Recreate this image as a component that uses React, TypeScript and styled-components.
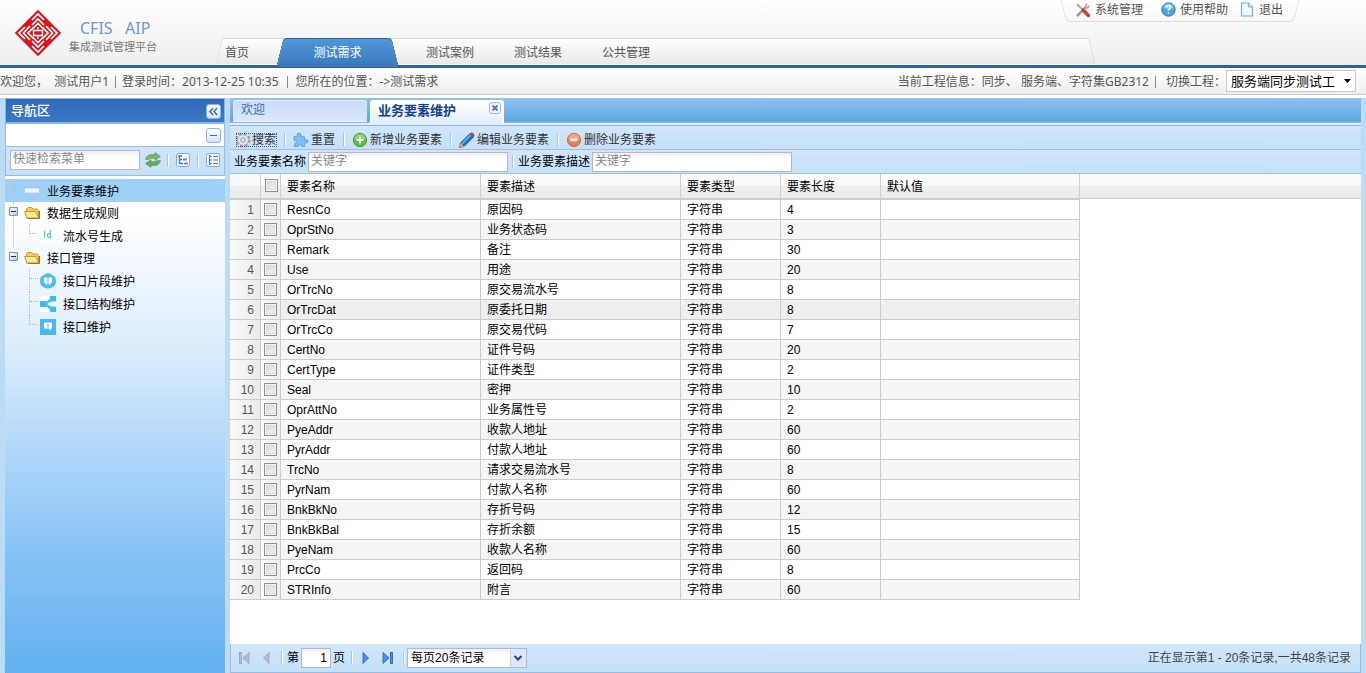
import React from 'react';
import styled, { createGlobalStyle, css } from 'styled-components';

const Global = createGlobalStyle`
  *, *::before, *::after { box-sizing: border-box; }
  body {
    margin: 0;
    font-family: "Liberation Sans", "Noto Sans CJK SC", sans-serif;
    font-size: 12px;
    line-height: 16px;
    color: #000;
    background: #fff;
  }
  button, input, select { font: inherit; color: inherit; margin: 0; }
  button { padding: 0; border: 0; background: none; cursor: pointer; }
  a { color: inherit; text-decoration: none; }
`;

const Page = styled.div`
  display: flex;
  flex-direction: column;
  min-height: 100vh;
`;

/* ---------- header ---------- */

const Header = styled.header`
  display: flex;
  position: relative;
  height: 68px;
  background: linear-gradient(#fff, #fafafa 30%, #eee);
  border-bottom: 3px solid #2b659f;
  color: #555;
`;

const Brand = styled.div`
  display: flex;
  flex: none;
  width: 215px;
  padding: 9px 0 0 14px;
  gap: 7px;
`;

const BrandText = styled.div`
  padding-top: 10px;
`;

const BrandName = styled.div`
  padding-left: 11px;
  font-family: "Noto Sans", sans-serif;
  font-size: 16px;
  line-height: 18px;
  color: #7096d6;
  white-space: pre;
`;

const BrandSub = styled.div`
  font-size: 11px;
  line-height: 20px;
  color: #777;
`;

const slant = css`
  content: "";
  position: absolute;
  top: 0;
  bottom: 0;
`;

const Nav = styled.nav`
  display: flex;
  position: relative;
  align-self: flex-end;
  flex: 1;
  height: 27px;
  margin-right: 270px;
  isolation: isolate;
  &::before, &::after {
    ${slant}
    z-index: -1;
    border: 1px solid #d8d8d8;
    border-bottom-color: #fff;
    background: linear-gradient(#fdfdfd, #e9e9e7);
    box-shadow: inset 0 1px 0 #fff;
  }
  &::before {
    left: 0;
    width: 50%;
    border-right: 0;
    border-top-left-radius: 4px;
    border-left-color: #e2e2e2;
    transform: skewX(-14deg);
    transform-origin: bottom left;
  }
  &::after {
    right: 0;
    width: 51%;
    border-left: 0;
    border-top-right-radius: 4px;
    transform: skewX(14deg);
    transform-origin: bottom right;
  }
`;

const NavLink = styled.a`
  padding: 7px 20px 0;
  white-space: nowrap;
  &:first-child { padding: 7px 27px 0 10px; }
`;

const NavActive = styled.a`
  position: relative;
  isolation: isolate;
  width: 123px;
  height: 29px;
  padding-top: 7px;
  margin-right: 7px;
  text-align: center;
  color: #fff;
  &::before, &::after {
    ${slant}
    z-index: -1;
    width: 60%;
    border: 1px solid #2b659f;
    border-bottom: 0;
    background: linear-gradient(#5197da, #3a78b8);
  }
  &::before {
    left: 0;
    border-right: 0;
    border-top-left-radius: 4px;
    transform: skewX(-14deg);
    transform-origin: bottom left;
  }
  &::after {
    right: 0;
    border-left: 0;
    border-top-right-radius: 4px;
    transform: skewX(14deg);
    transform-origin: bottom right;
  }
`;

const QuickLinks = styled.div`
  display: flex;
  position: absolute;
  top: 0;
  right: 66px;
  width: 240px;
  height: 22px;
  padding: 2px 0 0 15px;
  isolation: isolate;
  &::before, &::after {
    ${slant}
    z-index: -1;
    width: 55%;
    border-bottom: 1px solid #ddd;
    background: linear-gradient(#fff, #f7f7f7);
  }
  &::before {
    left: 0;
    border-left: 1px solid #ddd;
    border-bottom-left-radius: 4px;
    transform: skewX(16deg);
    transform-origin: top left;
  }
  &::after {
    right: 0;
    border-right: 1px solid #ddd;
    border-bottom-right-radius: 4px;
    transform: skewX(-16deg);
    transform-origin: top right;
  }
`;

const QuickLink = styled.a`
  display: flex;
  flex: none;
  gap: 4px;
  margin-right: 18px;
  white-space: nowrap;
  &:nth-child(2) { margin-right: 12px; }
`;

/* ---------- info bar ---------- */

const InfoBar = styled.div`
  display: flex;
  align-items: center;
  height: 27px;
  padding: 1px 10px 0 0;
  margin-bottom: 3px;
  background: linear-gradient(#fff, #eee);
  border-bottom: 1px solid #ccc;
  font-family: "Noto Sans", "Noto Sans CJK SC", sans-serif;
  color: #555;
  white-space: pre;
`;

const Spacer = styled.div`
  flex: 1;
`;

const Bar = styled.span<{ $gap?: number }>`
  width: 1px;
  height: 12px;
  margin: 0 ${p => p.$gap ?? 6}px;
  background: #888;
`;

const ProjectLabel = styled.label`
  display: flex;
  align-items: center;
  padding-left: 4px;
`;

const SelectShell = styled.span`
  position: relative;
  display: flex;
  margin-top: -1px;
  svg {
    position: absolute;
    right: 4px;
    top: 8px;
    pointer-events: none;
  }
`;

const ProjectSelect = styled.select`
  appearance: none;
  width: 130px;
  height: 22px;
  padding: 0 16px 0 4px;
  border: 1px solid #c6c6cf;
  border-radius: 0;
  background: #fff;
  font-size: 13px;
  color: #000;
`;

/* ---------- workspace ---------- */

const Workspace = styled.div`
  display: flex;
  flex: 1;
  gap: 5px;
  padding: 0 5px;
  background: #bcdcf5;
`;

const Sidebar = styled.aside`
  display: flex;
  flex-direction: column;
  flex: none;
  width: 220px;
`;

const SideTitle = styled.div`
  display: flex;
  align-items: center;
  justify-content: space-between;
  height: 26px;
  padding: 1px 3px 0 5px;
  border: 1px solid #8db4e8;
  border-width: 1px 1px 2px;
  background: linear-gradient(#2f68b6, #3b78c8);
  font-size: 13px;
  color: #fff;
  font-weight: 500;
`;

const TinyButton = styled.button`
  display: flex;
  align-items: center;
  justify-content: center;
  width: 15px;
  height: 15px;
  border: 1px solid #8fb7ea;
  border-radius: 3px;
  background: linear-gradient(#fff, #d3e4f8);
`;

const SideHead = styled.div`
  display: flex;
  align-items: center;
  justify-content: flex-end;
  height: 23px;
  padding-right: 3px;
  border: 1px solid #99bbe8;
  border-top: 0;
  background: #fff;
`;

const SideTools = styled.div`
  display: flex;
  align-items: center;
  height: 29px;
  padding: 0 0 2px 4px;
  border: 1px solid #99bbe8;
  border-top: 0;
  background: linear-gradient(#cfe5fb, #c5e1f7);
`;

const TextInput = styled.input<{ $w: number }>`
  width: ${p => p.$w}px;
  height: 20px;
  padding: 0 2px 2px;
  border: 1px solid #b5b8c8;
  border-radius: 0;
  background: linear-gradient(#eee, #fff 6px);
  outline: 0;
  &::placeholder { color: #888; opacity: 1; }
`;

const IconButton = styled.button<{ $before?: number }>`
  display: flex;
  flex: none;
  width: 16px;
  height: 16px;
  margin-left: ${p => p.$before ?? 0}px;
`;

const Divider = styled.span<{ $l?: number; $r?: number }>`
  flex: none;
  width: 2px;
  height: 13px;
  margin: 0 ${p => p.$r ?? 7}px 0 ${p => p.$l ?? 8}px;
  border-left: 1px solid #98c8ff;
  border-right: 1px solid #fff;
`;

const Tree = styled.ul`
  flex: 1;
  margin: 0;
  padding: 0;
  list-style: none;
  border-top: 3px solid #fff;
  background: linear-gradient(#fff, #fff 7%, #ddeefc 33%, #84c1f5 77%, #63b1f0);
`;

const TreeRow = styled.li<{ $level: number; $selected?: boolean; $folder?: boolean }>`
  display: flex;
  align-items: center;
  position: relative;
  height: ${p => (p.$folder ? 22 : 23)}px;
  padding: 2px 0 0 ${p => (p.$level ? 35 : 19)}px;
  gap: 7px;
  background: ${p => (p.$selected ? '#9fd0f6' : 'transparent')};
  svg { flex: none; margin-top: -2px; }
`;

const Twig = styled.span<{ $left: number; $last?: boolean }>`
  position: absolute;
  left: ${p => p.$left}px;
  top: 0;
  width: 8px;
  height: 100%;
  border-left: ${p => (p.$last ? 0 : 1)}px dotted #bbb;
  &::before {
    content: "";
    position: absolute;
    left: 0;
    top: 0;
    width: 8px;
    height: 10px;
    border-left: ${p => (p.$last ? 1 : 0)}px dotted #bbb;
    border-bottom: 1px dotted #bbb;
  }
`;

const Rail = styled.span`
  position: absolute;
  left: 8px;
  top: 0;
  height: 100%;
  border-left: 1px dotted #bbb;
`;

const Toggle = styled.button`
  position: absolute;
  left: 4px;
  top: 5px;
  width: 9px;
  height: 9px;
  border: 1px solid #7b8fb0;
  border-radius: 1px;
  background: linear-gradient(135deg, #fff, #b9c9e4);
  &::before {
    content: "";
    position: absolute;
    left: 1px;
    top: 3px;
    width: 5px;
    height: 1px;
    background: #1d2f55;
  }
`;

/* ---------- main panel ---------- */

const Main = styled.main`
  display: flex;
  flex-direction: column;
  flex: 1;
  min-width: 0;
  background: #fff;
`;

const TabStrip = styled.div`
  display: flex;
  height: 28px;
  padding: 2px 3px 0;
  gap: 3px;
  background: linear-gradient(#92c2ef, #5ba8e2 23px, #8db2e3 24px, #8db2e3 25px, #e2effd 25px, #e2effd 27px, #8fb3e4 27px);
`;

const Tab = styled.button<{ $active?: boolean }>`
  position: relative;
  width: 134px;
  height: ${p => (p.$active ? 23 : 22)}px;
  padding: 0 0 2px 7px;
  border: 1px solid #fff;
  border-width: 1px 2px 1px 1px;
  border-color: ${p => (p.$active ? '#fff #fff #e6f1fd' : '#e8f2fd #d0e4fa #e8f2fd')};
  border-radius: 3px 3px 0 0;
  background: ${p => (p.$active ? 'linear-gradient(#fff, #e2effd)' : 'linear-gradient(#c9dbf5, #d9e8fb)')};
  text-align: left;
  line-height: 18px;
  font-size: ${p => (p.$active ? 13 : 12)}px;
  font-weight: ${p => (p.$active ? 700 : 400)};
  color: ${p => (p.$active ? '#15428b' : '#416aa3')};
  svg { position: absolute; right: 1px; top: 1px; }
`;

const Toolbar = styled.div`
  display: flex;
  align-items: center;
  height: 24px;
  padding: 4px 0 0 5px;
  border-bottom: 1px solid #a5bfdb;
  background: linear-gradient(#d0e6fc, #c5e1f7);
`;

const SearchBar = styled(Toolbar)`
  padding: 0 0 0 4px;
`;

const ToolButton = styled.button<{ $focus?: boolean }>`
  display: flex;
  align-items: center;
  gap: 2px;
  color: #333;
  position: relative;
  ${p => p.$focus && css`
    gap: 1px;
    &::after {
      content: "";
      position: absolute;
      inset: 1px -1px 1px 1px;
      border: 1px dotted #555;
    }
  `}
`;

const FieldLabel = styled.label`
  display: flex;
  align-items: center;
  gap: 2px;
`;

/* ---------- grid ---------- */

const GridArea = styled.div`
  flex: 1;
  background: linear-gradient(#f9f9f9, #f9f9f9 11px, #eff0f2 12px, #e9eaec 24px, #ccc 24px, #ccc 25px, #fff 25px) no-repeat;
`;

const Table = styled.table`
  width: 850px;
  table-layout: fixed;
  border-collapse: separate;
  border-spacing: 0;
`;

const Col = styled.col<{ $w?: number }>`
  width: ${p => (p.$w ? `${p.$w}px` : 'auto')};
`;

const Th = styled.th`
  height: 26px;
  padding: 2px 0 0 6px;
  border-right: 1px solid #d0d0d0;
  border-bottom: 2px solid #ccc;
  text-align: left;
  font-weight: 400;
  line-height: 16px;
`;

const CheckTh = styled(Th)`
  padding: 0 0 1px 4px;
`;

const Row = styled.tr<{ $alt: boolean; $hover: boolean }>`
  background: ${p => (p.$hover ? '#eee' : p.$alt ? '#f5f5f5' : '#fff')};
`;

const Td = styled.td`
  height: 20px;
  padding: 0 0 0 6px;
  border-right: 1px solid #ccc;
  border-bottom: 1px solid #ccc;
  line-height: 18px;
`;

const NumTd = styled(Td)`
  padding: 0 6px 0 0;
  text-align: right;
  color: #555;
  background: linear-gradient(90deg, #fafafa, #ebebed);
`;

const CheckTd = styled(Td)`
  padding: 0 0 0 3px;
  background: linear-gradient(90deg, #fafafa, #eee);
`;

const Check = styled.input`
  appearance: none;
  display: block;
  width: 13px;
  height: 13px;
  border: 1px solid #8e8f8f;
  background: linear-gradient(135deg, #d0d4da, #f9f9f9);
  box-shadow: inset 0 0 0 1px #f4f4f4, inset 0 0 0 2px #d9dcdf;
`;

/* ---------- pager ---------- */

const Pager = styled.footer`
  display: flex;
  align-items: center;
  height: 29px;
  padding: 0 9px 1px 5px;
  border: 1px solid #99bbe8;
  border-top: 0;
  background: linear-gradient(#d0e6fc, #c5e1f7);
`;

const PageField = styled.label`
  display: flex;
  align-items: center;
  gap: 2px;
`;

const PageInput = styled.input`
  width: 30px;
  height: 20px;
  padding: 0 3px;
  border: 1px solid #b5b8c8;
  text-align: right;
  background: linear-gradient(#eee, #fff 6px);
`;

const PageSize = styled.select`
  appearance: none;
  width: 120px;
  height: 20px;
  padding: 0 18px 0 3px;
  border: 1px solid #b5b8c8;
  border-radius: 0;
  background: linear-gradient(#eee, #fff 6px);
`;

const ComboShell = styled.span`
  position: relative;
  display: flex;
  svg { position: absolute; right: 1px; top: 1px; pointer-events: none; }
`;

const Summary = styled.span`
  color: #444;
`;

/* ---------- drawings ---------- */

const Logo = () => (
  <svg width="48" height="48" viewBox="0 0 48 48" aria-hidden="true">
    <path d="M24 .8 47.200 24 24 47.200 .8 24Z" fill="#d7151c" />
    <g fill="none" stroke="#fff" strokeWidth="1.700">
      <path d="M18 11 24 5 30 11M18 16 24 10 30 16M18.500 20 24 14.500 29.500 20" />
      <path d="M18 37 24 43 30 37M18 32 24 38 30 32M18.500 28 24 33.500 29.500 28" />
      <path d="M11 18 5 24 11 30M16 17 9.500 24 16 31M19.500 18.500 14 24 19.500 29.500" />
      <path d="M37 18 43 24 37 30M32 17 38.500 24 32 31M28.500 18.500 34 24 28.500 29.500" />
    </g>
    <path d="M24 17 31 24 24 31 17 24Z" fill="#d7151c" />
    <path d="M19.500 21.500H28.500V26.500H19.500ZM24 18V21.500M24 26.500V30" fill="none" stroke="#fff" strokeWidth="1.400" />
  </svg>
);

const ToolsIcon = () => (
  <svg width="16" height="16" viewBox="0 0 16 16">
    <path d="M2 14 11 5" stroke="#999" strokeWidth="2.500" />
    <path d="M10 2.500a3 3 0 0 1 3-1l-1.500 2 1 1 2-1.500a3 3 0 0 1-4 3.500Z" fill="#aaa" />
    <path d="M2 2 9 9" stroke="#aaa" strokeWidth="2" />
    <path d="M8 8 13.500 13.500" stroke="#d5382c" strokeWidth="3.200" strokeLinecap="round" />
  </svg>
);

const HelpIcon = () => (
  <svg width="15" height="15" viewBox="0 0 15 15">
    <circle cx="7.500" cy="7.500" r="6.700" fill="#49a5e4" stroke="#2d80c4" />
    <path d="M2.500 6a5 4.500 0 0 1 10 0Q7.500 8 2.500 6Z" fill="#8ccbf2" />
    <path d="M5.500 5.500Q5.500 3.800 7.500 3.800T9.500 5.500Q9.500 6.600 7.500 7.600V8.800M7.500 10.200V11.500" fill="none" stroke="#fff" strokeWidth="1.500" />
  </svg>
);

const PageIcon = () => (
  <svg width="15" height="15" viewBox="0 0 15 15">
    <path d="M1.500 1H8.500L12.500 5V14H1.500Z" fill="#f1f9ff" stroke="#6bb5e4" strokeWidth="1.200" />
    <path d="M8.500 1V5H12.500" fill="#cbe8fa" stroke="#6bb5e4" />
  </svg>
);

const Caret = () => (
  <svg width="9" height="6" viewBox="0 0 9 6"><path d="M1 1H8L4.500 5Z" fill="#000" /></svg>
);

const RefreshIcon = () => (
  <svg width="16" height="16" viewBox="0 0 16 16">
    <path d="M.5 7.500Q1.500 2.500 7 2.500H10V.5L15.500 4.500 10 8.500V6.300H7Q4.500 6.300 4 7.500Z" fill="#7db568" stroke="#4d9a55" strokeWidth=".6" />
    <path d="M15.500 8.500Q14.500 13.500 9 13.500H6V15.500L.5 11.500 6 7.800V9.800H9Q11.500 9.800 12 8.500Z" fill="#6aa85a" stroke="#4d9a55" strokeWidth=".6" />
  </svg>
);

const ExpandIcon = () => (
  <svg width="16" height="16" viewBox="0 0 16 16">
    <rect x="1.500" y="1.500" width="13" height="13" rx="2" fill="#f5faff" stroke="#8aa9d4" />
    <path d="M3 4H7M4.500 4V11.500H8M4.500 7.500H7" fill="none" stroke="#3d86cc" strokeWidth="1.500" />
    <path d="M8 7.500H12M9 11.500H13" stroke="#888" strokeWidth="2" />
  </svg>
);

const CollapseIcon = () => (
  <svg width="16" height="16" viewBox="0 0 16 16">
    <rect x="1.500" y="1.500" width="13" height="13" rx="2" fill="#f5faff" stroke="#8aa9d4" />
    <path d="M4.500 3V13M4.500 4.500H7M4.500 8H7M4.500 11.500H7" fill="none" stroke="#3d86cc" strokeWidth="1.200" />
    <path d="M8 4.500H13M8 8H13M8 11.500H13" stroke="#777" />
  </svg>
);

const LeafBar = () => (
  <svg width="16" height="16" viewBox="0 0 16 16">
    <rect x=".5" y="5" width="15" height="5" fill="#eef5fd" stroke="#b3c7de" strokeWidth=".8" />
  </svg>
);

const FolderIcon = () => (
  <svg width="16" height="16" viewBox="0 0 16 16">
    <path d="M2.500 13V4L4 2.500H7.500L9 4H13.500L14.500 5.500V13Z" fill="#f5cd55" stroke="#c59a2a" />
    <path d="M3 13 .6 6.500H12L14.500 13Z" fill="#fdeb98" stroke="#c59a2a" />
    <path d="M4 13.500H15.500V6" fill="none" stroke="#9a7415" />
  </svg>
);

const IdIcon = () => (
  <svg width="16" height="16" viewBox="0 0 16 16">
    <rect width="16" height="16" fill="#fff" />
    <path d="M4.500 3V10M10.500 2V10M10.500 5.500H9Q7.500 5.500 7.500 7.500T9 9.500H10.500" fill="none" stroke="#5cc3ee" strokeWidth="1.300" />
  </svg>
);

const ClipIcon = () => (
  <svg width="16" height="16" viewBox="0 0 16 16">
    <path d="M4.500 1.500Q8-1.500 11.500 1.500L15 3.500Q17 8 15 12.500Q8 18.500 1 12.500Q-1 8 1 3.500Z" fill="#4cbff2" />
    <path d="M4 4.500H7.500V11.500H5.500V10H4ZM8.500 4.500H12V10H10.500V11.500H8.500Z" fill="#fff" />
  </svg>
);

const ShareIcon = () => (
  <svg width="16" height="16" viewBox="0 0 16 16">
    <rect width="16" height="16" fill="#fff" />
    <path d="M0 5H6V11H0ZM10 0H16V5.500H10ZM10 10.500H16V16H10Z" fill="#39bdf7" />
    <path d="M12 3 5 8 12 13" fill="none" stroke="#39bdf7" strokeWidth="2.400" />
  </svg>
);

const SquareIcon = () => (
  <svg width="16" height="16" viewBox="0 0 16 16">
    <rect width="16" height="16" fill="#45b8f0" />
    <path d="M4 3.500H12V9.500H10.500V12L8.500 9.500H4Z" fill="#fff" />
    <path d="M8 4.500V8.500" stroke="#3eb2ee" />
  </svg>
);

const CloseIcon = () => (
  <svg width="12" height="12" viewBox="0 0 12 12">
    <rect x=".5" y=".5" width="11" height="11" rx="2.500" fill="#edf4fc" stroke="#9bbce2" />
    <path d="M3.500 3.500 8.500 8.500M8.500 3.500 3.500 8.500" stroke="#5578a8" strokeWidth="1.800" />
  </svg>
);

const GearIcon = () => (
  <svg width="16" height="16" viewBox="0 0 16 16">
    <circle cx="8" cy="8" r="6.300" fill="none" stroke="#999" strokeWidth="2.400" strokeDasharray="2.600 2.350" />
    <circle cx="8" cy="8" r="5.300" fill="#e8e8e8" stroke="#aaa" strokeWidth=".8" />
    <circle cx="8" cy="8" r="2.300" fill="#cfe5fb" stroke="#999" />
  </svg>
);

const PuzzleIcon = () => (
  <svg width="16" height="16" viewBox="0 0 16 16">
    <path d="M1 4.500H4.500Q3 1 6 1T8 4.500H11.500V8Q15.200 6.800 15.200 9.300T11.500 11V14.500H8.500Q8.500 12.500 7 12.500T5.500 14.500H1.500V11.500Q3.500 11.500 3.500 9.800T1 8.500Z" fill="#7dbdef" stroke="#5a9fd8" strokeWidth=".8" />
  </svg>
);

const AddIcon = () => (
  <svg width="16" height="16" viewBox="0 0 16 16">
    <circle cx="8" cy="8" r="6.700" fill="#63bb3e" stroke="#3f8c2b" strokeWidth=".8" />
    <path d="M2.500 7a5.500 5 0 0 1 11 0Q8 9 2.500 7Z" fill="#8fd46c" />
    <path d="M8 4.500V11.500M4.500 8H11.500" stroke="#fff" strokeWidth="2.200" />
  </svg>
);

const PencilIcon = () => (
  <svg width="16" height="16" viewBox="0 0 16 16">
    <path d="M.5 15.500 1.500 11 11 1.500 14.500 5 5 14.500Z" fill="#1f6fd0" stroke="#134b93" strokeWidth=".7" />
    <path d="M3 12 11.500 3" stroke="#6bb0f5" strokeWidth="1.600" />
    <path d="M11 1.500Q12.500 0 14 1T15.500 4L14.500 5Z" fill="#d8352c" />
    <path d="M.5 15.500 1.500 11 5 14.500Z" fill="#e8a95a" />
  </svg>
);

const RemoveIcon = () => (
  <svg width="16" height="16" viewBox="0 0 16 16">
    <circle cx="8" cy="8" r="6.700" fill="#e7804b" stroke="#c0623a" strokeWidth=".8" />
    <path d="M2.500 7a5.500 5 0 0 1 11 0Q8 9 2.500 7Z" fill="#f4a983" />
    <path d="M4.500 8H11.500" stroke="#fff" strokeWidth="2.500" />
  </svg>
);

const Arrow = ({ bar, back }: { bar?: boolean; back?: boolean }) => (
  <svg width="16" height="16" viewBox="0 0 16 16">
    <g
      transform={back ? 'translate(16 0) scale(-1 1)' : undefined}
      fill={back ? '#b4bcc8' : '#4d8df0'}
      stroke={back ? '#9aa3af' : '#2559c4'}
      strokeWidth=".8"
    >
      <path d={bar ? 'M3 2.500 9 8 3 13.500Z' : 'M5 2.500 10.500 8 5 13.500Z'} />
      {bar && <rect x="10.500" y="2.500" width="2" height="11" />}
    </g>
  </svg>
);

const ComboArrow = () => (
  <svg width="16" height="18" viewBox="0 0 16 18">
    <rect width="16" height="18" fill="#dbe8f8" />
    <path d="M0 0V18" stroke="#b5b8c8" />
    <path d="M4.500 7 8 10.500 11.500 7" fill="none" stroke="#274a86" strokeWidth="2.200" />
  </svg>
);

/* ---------- data ---------- */

const rows: [string, string, number][] = [
  ['ResnCo', '原因码', 4],
  ['OprStNo', '业务状态码', 3],
  ['Remark', '备注', 30],
  ['Use', '用途', 20],
  ['OrTrcNo', '原交易流水号', 8],
  ['OrTrcDat', '原委托日期', 8],
  ['OrTrcCo', '原交易代码', 7],
  ['CertNo', '证件号码', 20],
  ['CertType', '证件类型', 2],
  ['Seal', '密押', 10],
  ['OprAttNo', '业务属性号', 2],
  ['PyeAddr', '收款人地址', 60],
  ['PyrAddr', '付款人地址', 60],
  ['TrcNo', '请求交易流水号', 8],
  ['PyrNam', '付款人名称', 60],
  ['BnkBkNo', '存折号码', 12],
  ['BnkBkBal', '存折余额', 15],
  ['PyeNam', '收款人名称', 60],
  ['PrcCo', '返回码', 8],
  ['STRInfo', '附言', 60],
];

const hoveredRow = 5;

export default function App() {
  return (
    <Page>
      <Global />
      <Header>
        <Brand>
          <Logo />
          <BrandText>
            <BrandName>{'CFIS   AIP'}</BrandName>
            <BrandSub>集成测试管理平台</BrandSub>
          </BrandText>
        </Brand>
        <Nav>
          <NavLink href="#home">首页</NavLink>
          <NavActive href="#need">测试需求</NavActive>
          <NavLink href="#case">测试案例</NavLink>
          <NavLink href="#result">测试结果</NavLink>
          <NavLink href="#common">公共管理</NavLink>
        </Nav>
        <QuickLinks>
          <QuickLink href="#system"><ToolsIcon />系统管理</QuickLink>
          <QuickLink href="#help"><HelpIcon />使用帮助</QuickLink>
          <QuickLink href="#exit"><PageIcon />退出</QuickLink>
        </QuickLinks>
      </Header>

      <InfoBar>
        <span>{'欢迎您，  测试用户1'}</span>
        <Bar />
        <span>登录时间：2013-12-25 10:35</span>
        <Bar $gap={8} />
        <span>{'您所在的位置：->测试需求'}</span>
        <Spacer />
        <span>{'当前工程信息：同步、 服务端、字符集GB2312'}</span>
        <Bar />
        <ProjectLabel>
          切换工程：
          <SelectShell>
            <ProjectSelect defaultValue="a">
              <option value="a">服务端同步测试工</option>
            </ProjectSelect>
            <Caret />
          </SelectShell>
        </ProjectLabel>
      </InfoBar>

      <Workspace>
        <Sidebar>
          <SideTitle>
            导航区
            <TinyButton aria-label="收起">
              <svg width="11" height="9" viewBox="0 0 11 9">
                <path d="M5 1 2 4.500 5 8M9 1 6 4.500 9 8" fill="none" stroke="#3e6dac" strokeWidth="1.500" />
              </svg>
            </TinyButton>
          </SideTitle>
          <SideHead>
            <TinyButton aria-label="折叠">
              <svg width="9" height="3" viewBox="0 0 9 3"><path d="M1 1.500H8" stroke="#3e6dac" /></svg>
            </TinyButton>
          </SideHead>
          <SideTools>
            <TextInput $w={130} aria-label="快速检索菜单" placeholder="快速检索菜单" />
            <IconButton $before={5} aria-label="刷新"><RefreshIcon /></IconButton>
            <Divider $l={6} $r={6} />
            <IconButton aria-label="展开"><ExpandIcon /></IconButton>
            <Divider $l={6} $r={6} />
            <IconButton aria-label="全部折叠"><CollapseIcon /></IconButton>
          </SideTools>
          <Tree>
            <TreeRow $level={0} $selected><Twig $left={8} /><LeafBar />业务要素维护</TreeRow>
            <TreeRow $level={0} $folder><Rail /><Toggle aria-label="折叠数据生成规则" /><FolderIcon />数据生成规则</TreeRow>
            <TreeRow $level={1}><Rail /><Twig $left={24} $last /><IdIcon />流水号生成</TreeRow>
            <TreeRow $level={0} $folder><Toggle aria-label="折叠接口管理" /><FolderIcon />接口管理</TreeRow>
            <TreeRow $level={1}><Twig $left={24} /><ClipIcon />接口片段维护</TreeRow>
            <TreeRow $level={1}><Twig $left={24} /><ShareIcon />接口结构维护</TreeRow>
            <TreeRow $level={1}><Twig $left={24} $last /><SquareIcon />接口维护</TreeRow>
          </Tree>
        </Sidebar>

        <Main>
          <TabStrip>
            <Tab>欢迎</Tab>
            <Tab $active>业务要素维护<CloseIcon /></Tab>
          </TabStrip>
          <Toolbar>
            <ToolButton $focus><GearIcon />搜索</ToolButton>
            <Divider />
            <ToolButton><PuzzleIcon />重置</ToolButton>
            <Divider />
            <ToolButton><AddIcon />新增业务要素</ToolButton>
            <Divider />
            <ToolButton><PencilIcon />编辑业务要素</ToolButton>
            <Divider />
            <ToolButton><RemoveIcon />删除业务要素</ToolButton>
          </Toolbar>
          <SearchBar>
            <FieldLabel>业务要素名称<TextInput $w={200} placeholder="关键字" /></FieldLabel>
            <Divider $l={4} $r={4} />
            <FieldLabel>业务要素描述<TextInput $w={200} placeholder="关键字" /></FieldLabel>
          </SearchBar>

          <GridArea>
            <Table>
              <colgroup>
                <Col $w={31} />
                <Col $w={20} />
                <Col $w={200} />
                <Col $w={200} />
                <Col $w={100} />
                <Col $w={100} />
                <Col />
              </colgroup>
              <thead>
                <tr>
                  <Th />
                  <CheckTh><Check type="checkbox" aria-label="全选" /></CheckTh>
                  <Th>要素名称</Th>
                  <Th>要素描述</Th>
                  <Th>要素类型</Th>
                  <Th>要素长度</Th>
                  <Th>默认值</Th>
                </tr>
              </thead>
              <tbody>
                {rows.map(([name, desc, len], i) => (
                  <Row key={name} $alt={i % 2 === 1} $hover={i === hoveredRow}>
                    <NumTd>{i + 1}</NumTd>
                    <CheckTd><Check type="checkbox" aria-label={name} /></CheckTd>
                    <Td>{name}</Td>
                    <Td>{desc}</Td>
                    <Td>字符串</Td>
                    <Td>{len}</Td>
                    <Td />
                  </Row>
                ))}
              </tbody>
            </Table>
          </GridArea>

          <Pager>
            <IconButton aria-label="首页"><Arrow back bar /></IconButton>
            <IconButton $before={6} aria-label="上一页"><Arrow back /></IconButton>
            <Divider $l={7} $r={4} />
            <PageField>第<PageInput defaultValue="1" />页</PageField>
            <Divider $l={6} $r={5} />
            <IconButton aria-label="下一页"><Arrow /></IconButton>
            <IconButton $before={6} aria-label="末页"><Arrow bar /></IconButton>
            <Divider $l={7} $r={2} />
            <ComboShell>
              <PageSize aria-label="每页记录数" defaultValue="20">
                <option value="20">每页20条记录</option>
              </PageSize>
              <ComboArrow />
            </ComboShell>
            <Spacer />
            <Summary>正在显示第1 - 20条记录,一共48条记录</Summary>
          </Pager>
        </Main>
      </Workspace>
    </Page>
  );
}
